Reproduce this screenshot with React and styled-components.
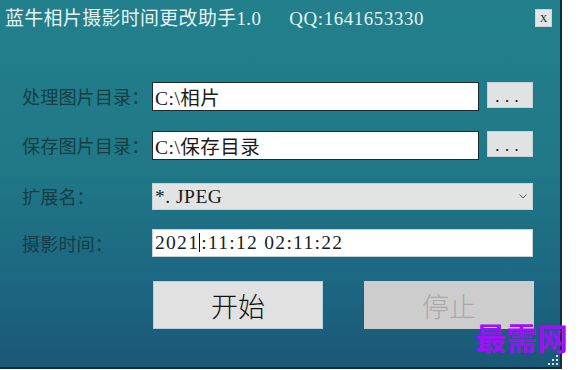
import React from "react";
import styled, { createGlobalStyle } from "styled-components";

const Global = createGlobalStyle`
  html, body { margin: 0; padding: 0; background: #ffffff; }
  body { font-family: "Liberation Serif", "Noto Sans CJK SC", serif; }
`;

const Window = styled.div`
  position: relative;
  box-sizing: border-box;
  width: 562px;
  height: 369px;
  background: linear-gradient(180deg, #22808c 0%, #207886 45%, #1c6682 78%, #1a5877 100%);
  border-right: 2px solid #0e2f3a;
  border-bottom: 2px solid #0e2f3a;
  display: flex;
  flex-direction: column;
  overflow: visible;
`;

const TitleBar = styled.div`
  display: flex;
  align-items: flex-start;
  height: 36px;
  padding: 8px 8px 0 5px;
  box-sizing: border-box;
`;

const Title = styled.div`
  font-family: "Liberation Serif", "Noto Sans CJK SC", serif;
  font-size: 18.9px;
  line-height: 22px;
  color: #e6f3f3;
  letter-spacing: 0.4px;
  white-space: pre;
  flex: 1;
  display: flex;
`;

const TitleQQ = styled.span`
  margin-left: 28px;
  letter-spacing: 0.6px;
`;

const CloseBtn = styled.div`
  width: 17px;
  height: 18px;
  margin-top: 1px;
  background: #e4e6e6;
  border: 1px solid #c9d6d8;
  box-sizing: border-box;
  display: flex;
  align-items: center;
  justify-content: center;
  font-family: "Liberation Serif", serif;
  font-size: 10px;
  color: #222;
`;

const Form = styled.div`
  display: flex;
  flex-direction: column;
  padding-left: 22px;
`;

const Row = styled.div`
  display: grid;
  grid-template-columns: 122px 327px 46px;
  column-gap: 8px;
  align-items: start;
  margin-top: ${(p) => p.$top}px;
`;

const Label = styled.div`
  font-family: "Noto Sans CJK SC", sans-serif;
  font-size: 18.2px;
  line-height: ${(p) => p.$h}px;
  height: ${(p) => p.$h}px;
  color: #163d46;
  white-space: nowrap;
`;

const Field = styled.div`
  box-sizing: border-box;
  height: ${(p) => p.$h}px;
  grid-column: ${(p) => (p.$wide ? "2 / 4" : "2 / 3")};
  background: ${(p) => (p.$gray ? "#e2e3e3" : "#ffffff")};
  border: 1px solid ${(p) => (p.$dark ? "#1a2a2e" : "#c7d3d6")};
  padding-left: 2px;
  display: flex;
  align-items: center;
  font-family: "Liberation Serif", "Noto Sans CJK SC", serif;
  font-size: 19.5px;
  letter-spacing: ${(p) => p.$spacing ?? 0.5}px;
  color: #1b1b1b;
  white-space: pre;
`;

const FieldText = styled.span`
  flex: 1;
`;

const Caret = styled.span`
  display: inline-block;
  width: 1px;
  height: 19px;
  background: #111;
  vertical-align: -3px;
  margin: 0 1px 0 0;
`;

const Chevron = styled.svg`
  width: 8px;
  height: 5px;
  margin-right: 5px;
`;

const BrowseBtn = styled.div`
  box-sizing: border-box;
  height: 26px;
  background: #e1e2e2;
  border: 1px solid #c3d4d8;
  display: flex;
  align-items: flex-end;
  justify-content: center;
  padding-bottom: 4px;
  font-family: "Liberation Sans", sans-serif;
  font-size: 13px;
  font-weight: bold;
  line-height: 10px;
  letter-spacing: 6px;
  color: #1c1c1c;
`;

const Actions = styled.div`
  display: flex;
  gap: 41px;
  margin-top: 24px;
  padding-left: 131px;
`;

const ActionBtn = styled.div`
  box-sizing: border-box;
  width: 170px;
  height: 48px;
  background: ${(p) => (p.$disabled ? "#cdcdcd" : "#e1e1e1")};
  border: 1px solid ${(p) => (p.$disabled ? "#c8cccd" : "#b9cdd6")};
  display: flex;
  align-items: center;
  justify-content: center;
  font-family: "Noto Sans CJK SC", sans-serif;
  font-size: 27px;
  font-weight: 300;
  color: ${(p) => (p.$disabled ? "#a9a9a9" : "#111111")};
  padding-top: 1px;
`;

const Watermark = styled.div`
  position: absolute;
  left: 475px;
  top: 318px;
  font-family: "Noto Sans CJK SC", sans-serif;
  font-size: 31px;
  line-height: 38px;
  font-weight: 700;
  color: #9a12f6;
  white-space: nowrap;
`;

const Grip = styled.svg`
  position: absolute;
  right: 1px;
  bottom: 1px;
  width: 11px;
  height: 11px;
`;

function PathRow({ top, label, value }) {
  return (
    <Row $top={top}>
      <Label $h={29}>{label}</Label>
      <Field $h={29} $dark>
        <FieldText>{value}</FieldText>
      </Field>
      <BrowseBtn>...</BrowseBtn>
    </Row>
  );
}

export default function App() {
  return (
    <>
      <Global />
      <Window>
        <TitleBar>
          <Title>
            <span>蓝牛相片摄影时间更改助手1.0</span>
            <TitleQQ>QQ:1641653330</TitleQQ>
          </Title>
          <CloseBtn>X</CloseBtn>
        </TitleBar>
        <Form>
          <PathRow top={46} label="处理图片目录：" value={"C:\\相片"} />
          <PathRow top={20} label="保存图片目录：" value={"C:\\保存目录"} />
          <Row $top={23}>
            <Label $h={27}>扩展名：</Label>
            <Field $h={27} $wide $gray>
              <FieldText>*. JPEG</FieldText>
              <Chevron viewBox="0 0 8 5">
                <path d="M0.5 0.5 L4 4 L7.5 0.5" fill="none" stroke="#555" strokeWidth="1" />
              </Chevron>
            </Field>
          </Row>
          <Row $top={19}>
            <Label $h={28}>摄影时间：</Label>
            <Field $h={28} $wide $spacing={1.3}>
              <FieldText>
                2021<Caret />:11:12 02:11:22
              </FieldText>
            </Field>
          </Row>
          <Actions>
            <ActionBtn>开始</ActionBtn>
            <ActionBtn $disabled>停止</ActionBtn>
          </Actions>
        </Form>
        <Watermark>最需网</Watermark>
        <Grip viewBox="0 0 11 11">
          {[
            [9, 1],
            [5, 5],
            [9, 5],
            [1, 9],
            [5, 9],
            [9, 9],
          ].map(([x, y], i) => (
            <rect key={i} x={x - 1} y={y - 1} width="2" height="2" fill="#d6e4ea" />
          ))}
        </Grip>
      </Window>
    </>
  );
}
